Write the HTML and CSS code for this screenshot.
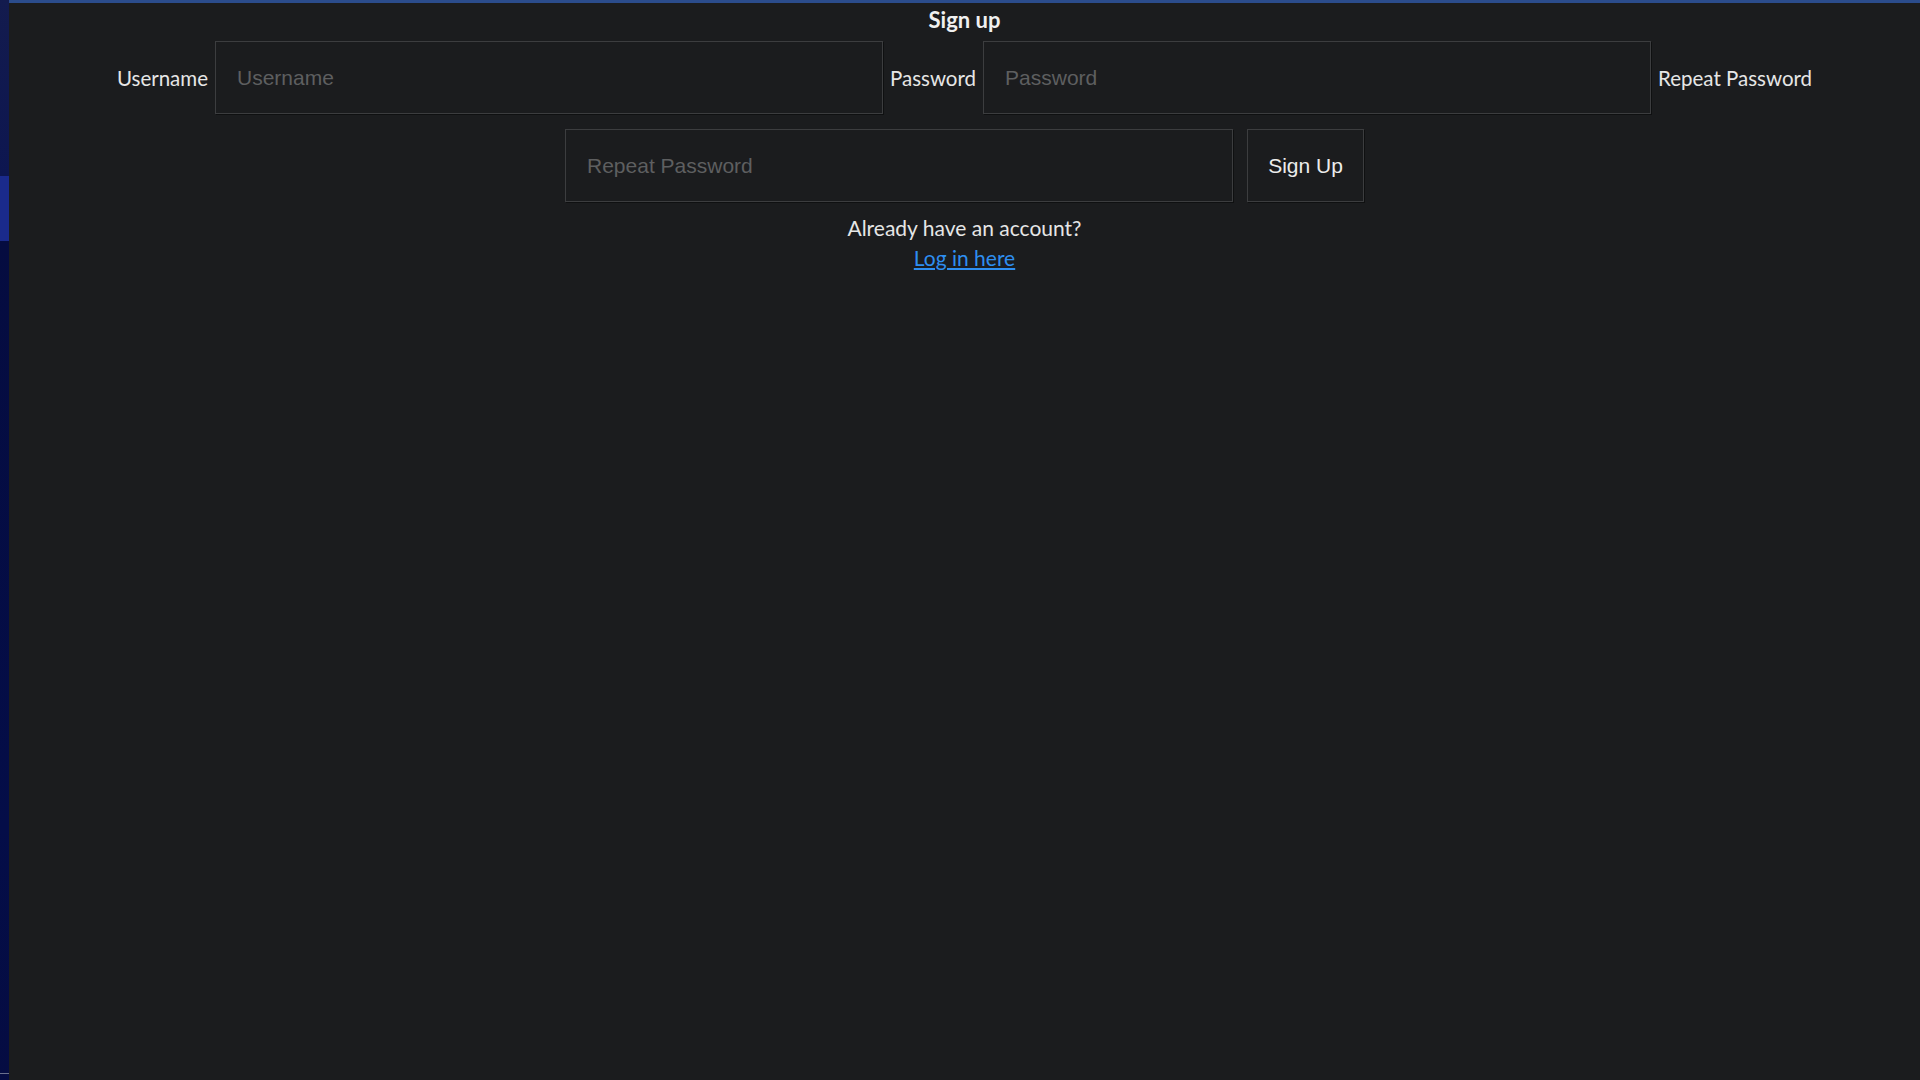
FILE: index.html
```html
<!DOCTYPE html>
<html lang="en">
<head>
<meta charset="utf-8">
<title>Sign up</title>
<link rel="stylesheet" href="styles.css">
</head>
<body>
<div class="app">
  <div class="rail">
    <div class="rail-top"></div>
    <div class="rail-active"></div>
    <div class="rail-rest"><div class="rail-line"></div></div>
  </div>
  <main class="main">
    <h1 class="title">Sign up</h1>
    <form class="form">
      <label class="label" for="u">Username</label>
      <input class="field" id="u" type="text" placeholder="Username">
      <label class="label" for="p">Password</label>
      <input class="field" id="p" type="password" placeholder="Password">
      <label class="label" for="r">Repeat Password</label>
      <input class="field" id="r" type="password" placeholder="Repeat Password">
      <button class="btn" type="button">Sign Up</button>
    </form>
    <p class="note">Already have an account?</p>
    <a class="link" href="#">Log in here</a>
  </main>
</div>
</body>
</html>
```
FILE: styles.css
```css
html, body {
  margin: 0;
  padding: 0;
  height: 100%;
  background: #1b1c1e;
}
.app {
  display: flex;
  height: 100vh;
}
.rail {
  width: 9px;
  flex: 0 0 9px;
  display: flex;
  flex-direction: column;
}
.rail-top {
  height: 176px;
  background: linear-gradient(#131b4e, #0d1650);
}
.rail-active {
  height: 65px;
  background: #1a2a8c;
}
.rail-rest {
  flex: 1;
  background: linear-gradient(#050c40, #040d48 70%, #050c42);
  display: flex;
  flex-direction: column;
  justify-content: flex-end;
  padding-bottom: 6px;
}
.rail-line {
  height: 1px;
  background: #6a6f8c;
}
.main {
  flex: 1;
  border-top: 3px solid #2b4c8c;
  background: #1b1c1e;
  text-align: center;
  padding-top: 4px;
  font-family: Lato, "Open Sans", sans-serif;
  color: #e6e6e6;
}
.title {
  margin: 0;
  font-size: 22px;
  line-height: 25px;
  font-weight: 700;
  color: #f0f0f0;
}
.form {
  margin-top: 9px;
  display: flex;
  flex-wrap: wrap;
  justify-content: center;
  align-items: center;
  column-gap: 7px;
  row-gap: 15px;
}
.label {
  font-size: 20.5px;
  color: #e6e6e6;
}
.field {
  box-sizing: border-box;
  width: 668px;
  height: 73px;
  margin: 0;
  padding: 0 21px;
  border: 1px solid #3c3d3f;
  box-shadow: 1px 1px 0 #0f1011;
  background: #1b1c1e;
  color: #e6e6e6;
  font-family: "Liberation Sans", Arial, sans-serif;
  font-size: 21px;
  outline: none;
}
.field::placeholder {
  color: #5e5f60;
}
.btn {
  box-sizing: border-box;
  width: 117px;
  height: 73px;
  margin: 0 0 0 7px;
  padding: 0;
  border: 1px solid #3c3d3f;
  box-shadow: 1px 1px 0 #0f1011;
  background: #1b1c1e;
  color: #ececec;
  font-family: "Liberation Sans", Arial, sans-serif;
  font-size: 21px;
  cursor: pointer;
}
.note {
  margin: 11px 0 0;
  font-size: 21px;
  line-height: 30px;
}
.link {
  display: inline-block;
  font-size: 21px;
  line-height: 30px;
  color: #2e8ef0;
  text-decoration: underline;
}
```
